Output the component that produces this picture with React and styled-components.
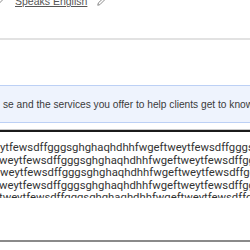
import React from "react";
import styled, { createGlobalStyle } from "styled-components";

const Global = createGlobalStyle`
  html, body { margin: 0; padding: 0; background: #fff; }
  body { width: 250px; height: 250px; overflow: hidden; font-family: "Liberation Sans", Arial, sans-serif; }
`;

const Page = styled.div`
  width: 250px;
  height: 250px;
  overflow: hidden;
  display: flex;
  flex-direction: column;
`;

const TopRow = styled.div`
  display: flex;
  align-items: center;
  height: 12px;
  margin-top: -5px;
  margin-left: -5px;
  gap: 8px;
  color: #5a5a5a;
`;

const LangLink = styled.a`
  color: #555;
  text-decoration: underline;
  font-size: 10.5px;
  margin-left: 3px;
`;

const IconWrap = styled.span`
  display: inline-flex;
  color: #666;
  margin-left: ${(p) => p.$ml || 0}px;
`;

const Divider = styled.div`
  height: 2px;
  background: #e2e2e2;
  margin-top: 31px;
`;

const InfoBox = styled.div`
  margin: 45px -10px 0 -10px;
  height: 36px;
  border: 1px solid #bcd0f5;
  background: #eef3fd;
  display: flex;
  align-items: center;
  padding-left: 12px;
  color: #3a3a3a;
  font-size: 10.2px;
  white-space: nowrap;
  overflow: hidden;
`;

const Field = styled.div`
  margin-top: 6px;
  border-top: 1px solid #c9c9c9;
  height: 112px;
  display: flex;
  flex-direction: column;
`;

const FieldInner = styled.div`
  border-top: 2px solid #1b1b1b;
  flex: 1;
  display: flex;
  flex-direction: column;
  border-bottom: 2px solid #8a8a8a;
`;

const TextArea = styled.div`
  margin-top: 10px;
  height: 56px;
  overflow: hidden;
  font-family: Roboto, "Noto Sans", sans-serif;
  font-size: 11.3px;
  line-height: 12.6px;
  color: #333;
`;

const Line = styled.div`
  white-space: nowrap;
  margin-left: ${(p) => p.$off || 0}px;
`;

const Pencil = () => (
  <svg width="9" height="9" viewBox="0 0 24 24" fill="none" stroke="currentColor" strokeWidth="2" strokeLinecap="round" strokeLinejoin="round">
    <path d="M17 3a2.85 2.83 0 1 1 4 4L7.5 20.5 2 22l1.5-5.5Z" />
  </svg>
);

const lines = [
  { t: "ytfewsdffgggsghghaqhdhhfwgeftweytfewsdffgggsghghaqhdhhfwgeft", off: 0 },
  { t: "weytfewsdffgggsghghaqhdhhfwgeftweytfewsdffgggsghghaqhdhhfwgeft", off: -1 },
  { t: "weytfewsdffgggsghghaqhdhhfwgeftweytfewsdffgggsghghaqhdhhfwgeft", off: 0 },
  { t: "weytfewsdffgggsghghaqhdhhfwgeftweytfewsdffgggsghghaqhdhhfwgeft", off: -1 },
  { t: "tweytfewsdffgggsghghaqhdhhfwgeftweytfewsdffgggsghghaqhdhhfwgeft", off: -1 },
];

export default function App() {
  return (
    <>
      <Global />
      <Page>
        <TopRow>
          <IconWrap><Pencil /></IconWrap>
          <LangLink href="#">Speaks English</LangLink>
          <IconWrap $ml={2}><Pencil /></IconWrap>
        </TopRow>
        <Divider />
        <InfoBox>se and the services you offer to help clients get to know you better.</InfoBox>
        <Field>
          <FieldInner>
            <TextArea>
              {lines.map((l, i) => (
                <Line key={i} $off={l.off}>{l.t}</Line>
              ))}
            </TextArea>
          </FieldInner>
        </Field>
      </Page>
    </>
  );
}
